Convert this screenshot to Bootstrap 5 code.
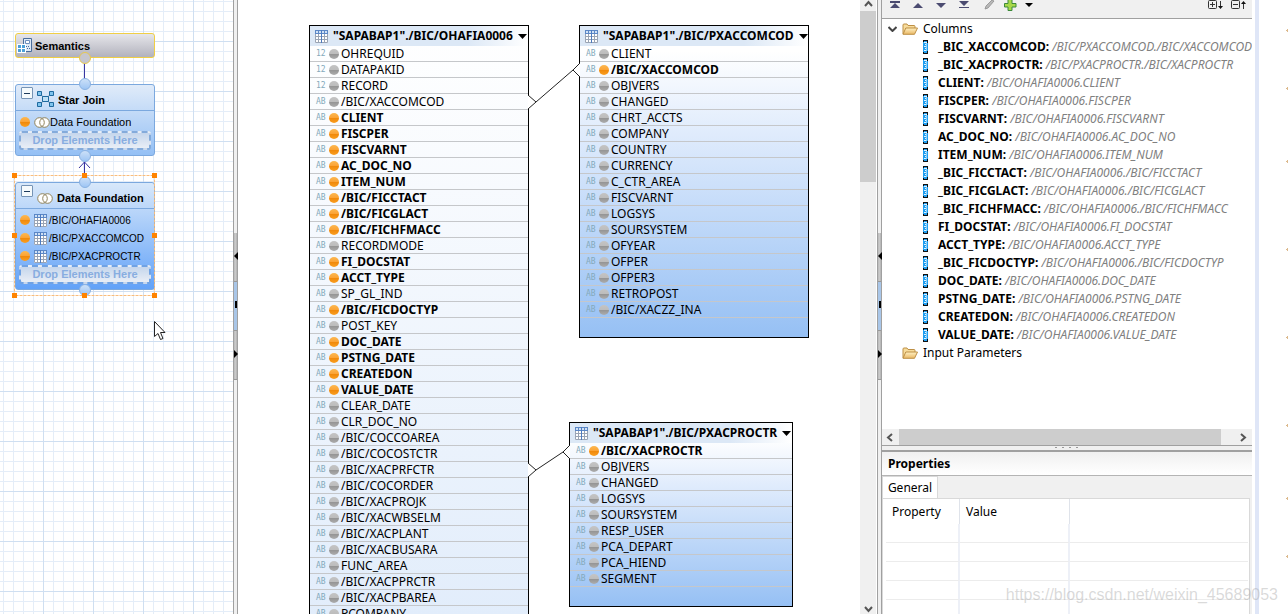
<!DOCTYPE html>
<html lang="en">
<head>
<meta charset="utf-8">
<meta name="viewport" content="width=device-width, initial-scale=1">
<title>Calculation view editor</title>
<link href="https://cdn.jsdelivr.net/npm/bootstrap@5.3.0/dist/css/bootstrap.min.css" rel="stylesheet">
<style>
  body { font-family: "Noto Sans", "Open Sans", sans-serif; font-size: 12px; line-height: 16px; color: #000; background: #fff; }
  button { border: 0; background: none; padding: 0; color: inherit; display: block; line-height: 0; }
  svg { display: block; flex: none; }

  /* scenario pane */
  .scenario { width: 233px; font-family: "Liberation Sans", Arial, sans-serif; font-size: 11px; white-space: nowrap;
    background-image:
      linear-gradient(#cfdff1 1px, transparent 1px), linear-gradient(90deg, #cfdff1 1px, transparent 1px),
      linear-gradient(#e4edf8 1px, transparent 1px), linear-gradient(90deg, #e4edf8 1px, transparent 1px);
    background-size: 50px 50px, 50px 50px, 10px 10px, 10px 10px;
    background-position: 0 41px, 43px 0, 0 1px, 3px 0; }
  .flow-node { left: 15px; width: 140px; border: 1px solid #7ba8de; border-radius: 3px; }
  .node-semantics { top: 33px; height: 25px; gap: 1px; border-color: #f0cf45; background: linear-gradient(#e6e6ea, #b2b2bd); }
  .node-star { top: 84px; height: 72px; background: linear-gradient(#e0ebf9, #94c0f5); }
  .node-data { top: 182px; height: 108px; background: linear-gradient(#d8e8fa, #62a2f8); }
  .node-head { height: 26px; margin-bottom: 2px; border-bottom: 1px solid #7ba8de; padding: 2px 5px 0; gap: 4px; }
  .toggle-box { width: 12px; height: 12px; background: #f5fafc; border: 1px solid #7593b5; border-radius: 1px; }
  .toggle-box::after { content: ""; display: block; width: 6px; height: 1px; background: #1d3b5c; margin: 4px 2px; }
  .src-row { height: 18px; padding-left: 4px; }
  .src-row .bw-name { font-size: 10px; padding: 2px 0 0 2px; }
  .drop-here { height: 19px; margin: 0 3px; line-height: 15px; border: 2px dashed #84abdb; border-radius: 3px; background: linear-gradient(#c5d6ec, #e9eef6); color: #88ade0; }
  .node-data .drop-here { border-color: #6fa2e4; }

  /* sashes */
  .sash { width: 5px; background: #f0f0f0; border-left: 1px solid #a0a0a0; border-right: 1px solid #a0a0a0; padding-top: 233px; }
  .sash button { width: 3px; height: 49px; background: linear-gradient(90deg, #bbb, #c9c9c9 50%, #b2b2b2); border-bottom: 1px solid #999; }
  .sash button.mid { background: #a9c6e8; }

  /* join canvas */
  .join-table { border: 1px solid #000; }
  .join-head { height: 20px; padding: 0 4px 0 5px; gap: 5px; background: linear-gradient(90deg, #dce8f6 72%, #fff); white-space: nowrap; }
  .join-row { height: 16px; line-height: 15px; border-bottom: 1px solid #c5c7ca; padding-left: 6px; white-space: nowrap; }
  .join-row small { font: 8px/15px "DejaVu Sans Mono", monospace; width: 13px; color: #84a9bb; }
  .join-row svg { margin-right: 2px; }
  .join-a { left: 71px; top: 25px; width: 220px; background: linear-gradient(#fff, #e2edfb 590px); }
  .join-b { left: 341px; top: 25px; width: 230px; }
  .join-c { left: 331px; top: 422px; width: 224px; }
  .join-b, .join-c { padding-bottom: 19px; background: linear-gradient(#fff 8%, #dfebfc 35%, #96c0f4); }
  .vbar { width: 16px; margin-right: 1px; background: #f0f0f0; }
  .vbar .thumb { height: 171px; background: #cdcdcd; }

  /* output pane */
  .output { width: 370px; }
  .tools { height: 19px; background: #f0f0f0; border-bottom: 1px solid #a0a0a0; padding: 0 6px 8px 8px; }
  .tree-line { height: 18px; line-height: 18px; padding-left: 20px; gap: 5px; white-space: nowrap; }
  .tree-line.root { height: 19px; padding-left: 6px; }
  .tree-line.leaf { padding-left: 41px; gap: 9px; }
  .tree-line i { color: #808080; }
  .hbar { height: 16px; background: #f0f0f0; }
  .hbar .thumb { background: #cdcdcd; }
  .grip { height: 7px; border-top: 1px solid #a0a0a0; border-bottom: 2px solid #a0a0a0; background: #f0f0f0; }
  .props-title { height: 24px; line-height: 23px; padding-left: 6px; font-size: 12px; background: linear-gradient(#f0f0f0, #fff); border-bottom: 1px solid #b4b4b4; }
  .props-body { background: #f0f0f0; }
  .tabstrip button { width: 56px; height: 22px; line-height: 20px; background: #fff; border: 1px solid #d9d9d9; border-bottom: 0; }
  .props-box { border: 1px solid #d9d9d9; border-bottom: 0; margin-right: 2px; padding: 0 1px 0 3px; background: #fff; }
  .props-grid { table-layout: fixed; border-collapse: separate; border-spacing: 0; }
  .props-grid th { font-weight: 400; height: 25px; padding: 0 6px; border-right: 1px solid #dfe3ea; }
  .props-grid td { height: 19px; padding: 0; border-bottom: 1px solid #ececec; border-right: 2px solid #edf0f7; }
  .props-grid tr:last-child td { height: 14px; border-bottom: 0; }
  .props-grid th:last-child, .props-grid td:last-child { border-right: 0; }
  .page-edge { width: 36px; padding-left: 3px; }
  .page-edge .stripe { width: 4px; background: #dfe6f7; }
  .watermark { right: 10px; bottom: 8px; font: 16px/22px "Liberation Sans", Arial, sans-serif; color: rgba(150,150,150,.36); }
</style>
</head>
<body class="vh-100 overflow-hidden d-flex position-relative">

<svg width="0" height="0" class="position-absolute" aria-hidden="true">
  <defs>
    <linearGradient id="gOr" x2="0" y2="1"><stop offset="0" stop-color="#fcb851"/><stop offset=".5" stop-color="#fba233"/><stop offset=".55" stop-color="#f08a0c"/><stop offset="1" stop-color="#fb9f20"/></linearGradient>
    <linearGradient id="gGr" x2="0" y2="1"><stop offset="0" stop-color="#c4c4c4"/><stop offset=".45" stop-color="#bdbdbd"/><stop offset=".55" stop-color="#969696"/><stop offset="1" stop-color="#adadad"/></linearGradient>
    <linearGradient id="gPort" x2="0" y2="1"><stop offset="0" stop-color="#cfe2f8"/><stop offset="1" stop-color="#9cc4f4"/></linearGradient>
    <linearGradient id="gFold" x2="0" y2="1"><stop offset="0" stop-color="#fff1c4"/><stop offset="1" stop-color="#e9b865"/></linearGradient>
    <symbol id="ballO" viewBox="0 0 10 10"><circle cx="5" cy="5" r="5" fill="url(#gOr)"/></symbol>
    <symbol id="ballG" viewBox="0 0 10 10"><circle cx="5" cy="5" r="5" fill="url(#gGr)"/></symbol>
    <symbol id="tbl" viewBox="0 0 13 13"><path fill="#fff" d="M0 0h13v13H0z"/><path fill="#5b87c6" d="M0 0h13v4H0z"/><path fill="#cfe0f4" d="M1 1h2v2H1zM4 1h2v2H4zM7 1h2v2H7zM10 1h2v2h-2z"/><path stroke="#9aa4b4" fill="none" d="M.5 4v8.500h12V4M3.500 4v9M9.500 4v9M0 6.500h13M0 9.500h13"/><path stroke="#4e7cc0" d="M6.500 0v13"/></symbol>
    <symbol id="rings" viewBox="0 0 16 11"><circle cx="5.500" cy="5.500" r="4.800" fill="#fff"/><circle cx="10.500" cy="5.500" r="4.800" fill="#fff"/><g fill="none" stroke="#8f8259"><circle cx="5.500" cy="5.500" r="4.800"/><circle cx="10.500" cy="5.500" r="4.800"/></g></symbol>
    <symbol id="col" viewBox="0 0 6 14"><path fill="#1f9df0" d="M0 0h5v14H0z"/><path fill="#111" d="M0 0h5v1H0zM0 13h5v1H0zM4 1h1v2H4zM4 11h1v2H4zM0 1h1v1H0zM0 12h1v1H0z"/><path fill="#e3f5ff" d="M1 2h3v1H1zM2 4h2v1H2zM1 6h3v1H1zM2 8h2v1H2zM1 10h3v1H1z"/><path fill="#8fd2fb" d="M3 3h1v8H3z"/></symbol>
    <symbol id="folder" viewBox="0 0 16 12"><path d="M1 11V2q0-1 1-1h3l1 1.500h6q1 0 1 1V5" fill="#f7dc9c" stroke="#bd8f45"/><path d="M1 11.300 3.800 5H15.500l-3 6.300z" fill="url(#gFold)" stroke="#bd8f45"/></symbol>
  </defs>
</svg>

<!-- scenario pane -->
<aside class="scenario position-relative flex-shrink-0 overflow-hidden">
  <div class="flow-node node-semantics position-absolute d-flex align-items-center fw-bold">
    <svg width="18" height="16" viewBox="0 0 18 16"><path d="M7.500.5h8v13h-8z" fill="#dde9f7" stroke="#4a6d9c"/><path d="M9.500 2.500h4v3h-4z" fill="#fff" stroke="#6d8fbd"/><path d="M10 8h1v1h-1zM12 8h1v1h-1zM11 10h1v1h-1zM13 10h1v1h-1z" fill="#476b9c"/><path d="M1 6h9v9H1z" fill="#fff"/><path d="M2 7h3v3H2zM6 7h3v3H6zM2 11h3v3H2zM6 11h3v3H6z" fill="#4c9fd8"/></svg>
    <span>Semantics</span>
  </div>
  <div class="flow-node node-star position-absolute">
    <div class="node-head d-flex fw-bold">
      <button class="toggle-box" aria-label="Collapse Star Join"></button>
      <svg class="mt-1" width="17" height="16" viewBox="0 0 17 16"><path d="M3 3l11 10M14 3 3 13" stroke="#5c6f84"/><g fill="#7fc4ee" stroke="#1f6a9f"><path d="M.5.5h4v4h-4zM12.500.5h4v4h-4zM.5 11.500h4v4h-4zM12.500 11.500h4v4h-4z"/><path fill="#bfe0f5" d="M5.500 5.500h6v5h-6z"/></g></svg>
      <span class="pt-1 mt-1 lh-1">Star Join</span>
    </div>
    <div class="src-row d-flex align-items-center"><svg width="10" height="10"><use href="#ballO"/></svg><svg class="ms-1" width="16" height="11"><use href="#rings"/></svg><span>Data Foundation</span></div>
    <div class="drop-here text-center fw-bold">Drop Elements Here</div>
  </div>
  <div class="flow-node node-data position-absolute">
    <div class="node-head d-flex fw-bold">
      <button class="toggle-box" aria-label="Collapse Data Foundation"></button>
      <svg class="mt-2" width="16" height="11"><use href="#rings"/></svg>
      <span class="pt-1 mt-1 lh-1">Data Foundation</span>
    </div>
    <div id="sources"></div>
    <div class="drop-here text-center fw-bold">Drop Elements Here</div>
  </div>
  <svg class="position-absolute top-0 start-0" width="233" height="400" fill="none">
    <path d="M84.500 63v16M84.500 162v16M79 168l5.500-6 5.500 6" stroke="#3a35a0"/>
    <path d="M14.500 175.500h140v120h-140z" stroke="#f9bd7c" stroke-dasharray="3 1"/>
    <circle cx="85" cy="58" r="5.500" fill="#c6c6ce" stroke="#e8c84e"/>
    <g fill="url(#gPort)" stroke="#8ab2e2"><circle cx="85" cy="84" r="5.500"/><circle cx="85" cy="156" r="5.500"/><circle cx="85" cy="182" r="5.500"/><circle cx="85" cy="290" r="5.500"/></g>
    <path fill="#ff8400" d="M12 173h5v5h-5zM82 173h5v5h-5zM152 173h5v5h-5zM12 233h5v5h-5zM152 233h5v5h-5zM12 293h5v5h-5zM82 293h5v5h-5zM152 293h5v5h-5z"/>
    <path d="M154.500 321.500v15l3.500-3 2.500 6 2.500-1-2.500-6h4.500z" fill="#fff" stroke="#222"/>
  </svg>
</aside>

<div class="sash flex-shrink-0 position-relative">
  <button aria-label="Collapse left"></button><button class="mid" aria-label="Restore"></button><button aria-label="Collapse right"></button>
  <svg class="position-absolute start-0 top-0" width="4" height="400"><path d="M4 252v8l-4-4zM1 301h2v7H1zM0 350v8l4-4z"/></svg>
</div>

<!-- join canvas -->
<main class="position-relative flex-grow-1 overflow-hidden">
  <section class="join-table join-a position-absolute" data-key="a"></section>
  <section class="join-table join-b position-absolute" data-key="b"></section>
  <section class="join-table join-c position-absolute" data-key="c"></section>
  <svg class="position-absolute top-0 start-0" width="600" height="600" fill="#fff">
    <path d="M290 95v14l8-7zM342 63v14l-7-7zM290 463v14l8-7zM332 445v14l-7-7z"/>
    <path fill="none" stroke="#222" d="M290 95l8 7-8 7M298 102l37-32M342 63l-7 7 7 7M290 463l8 7-8 7M298 470l27-18M332 445l-7 7 7 7"/>
  </svg>
</main>
<div class="vbar flex-shrink-0 d-flex flex-column">
  <button class="mx-auto" aria-label="Scroll up"><svg width="9" height="11" fill="none" stroke="#555" stroke-width="2"><path d="M1 6l3.500-4L8 6"/></svg></button>
  <div class="thumb"></div>
  <button class="mx-auto mt-auto" aria-label="Scroll down"><svg width="9" height="11" fill="none" stroke="#555" stroke-width="2"><path d="M1 4l3.500 4L8 4"/></svg></button>
</div>

<div class="sash flex-shrink-0 position-relative">
  <button aria-label="Collapse left"></button><button class="mid" aria-label="Restore"></button><button aria-label="Collapse right"></button>
  <svg class="position-absolute start-0 top-0" width="4" height="400"><path d="M4 252v8l-4-4zM1 301h2v7H1zM0 350v8l4-4z"/></svg>
</div>

<!-- output pane -->
<section class="output flex-shrink-0 d-flex flex-column">
  <div class="tools d-flex align-items-center">
    <button aria-label="Move to top"><svg width="23" height="10" fill="#4b4b70"><path d="M0 1h10v2H0zM5 3l5 5H0z"/></svg></button>
    <button aria-label="Move up"><svg width="23" height="10" fill="#4b4b70"><path d="M5 3l5 5H0z"/></svg></button>
    <button aria-label="Move down"><svg width="23" height="10" fill="#4b4b70"><path d="M5 8 0 3h10z"/></svg></button>
    <button aria-label="Move to bottom"><svg width="25" height="10" fill="#4b4b70"><path d="M5 6 0 1h10zM0 7h10v1H0z"/></svg></button>
    <button aria-label="Edit"><svg width="20" height="10"><path d="M1 9l1-3 6-6 2 1-6 7z" fill="#b8b8b8" stroke="#8d8d8d" stroke-width=".8"/></svg></button>
    <button aria-label="Add"><svg width="21" height="12"><path d="M4 .5h4v4h4v3.500H8v3.500H4V8H.5V4.500H4z" fill="#a8d84a" stroke="#3c8a3a"/></svg></button>
    <button aria-label="Add menu"><svg width="8" height="6"><path d="M0 1h8L4 5z"/></svg></button>
    <button class="ms-auto me-2" aria-label="Expand all"><svg width="15" height="10" fill="none" stroke="#333"><rect x=".5" y=".5" width="8" height="8" rx="1"/><path d="M2 4.500h5M4.500 2v5M12.500 1v6"/><path fill="#111" stroke="none" d="M10 6h5l-2.500 3z"/></svg></button>
    <button aria-label="Collapse all"><svg width="15" height="10" fill="none" stroke="#333"><rect x=".5" y=".5" width="8" height="8" rx="1"/><path d="M2 4.500h5M12.500 3v6"/><path fill="#111" stroke="none" d="M10 4h5l-2.500-3z"/></svg></button>
  </div>
  <div class="flex-grow-1 overflow-hidden">
    <div class="tree-line root d-flex align-items-center"><svg width="9" height="6" fill="none" stroke="#444" stroke-width="2"><path d="M.5 1l4 4 4-4"/></svg><svg width="16" height="12"><use href="#folder"/></svg><span>Columns</span></div>
    <div id="columns"></div>
    <div class="tree-line d-flex align-items-center"><svg width="16" height="12"><use href="#folder"/></svg><span>Input Parameters</span></div>
  </div>
  <div class="hbar d-flex">
    <button class="px-1" aria-label="Scroll left"><svg width="9" height="9" fill="none" stroke="#555" stroke-width="2"><path d="M6 1 2 4.500 6 8"/></svg></button>
    <div class="thumb flex-grow-1"></div>
    <button class="ps-3 pe-1" aria-label="Scroll right"><svg width="11" height="9" fill="none" stroke="#555" stroke-width="2"><path d="M4 1l4 3.500L4 8"/></svg></button>
  </div>
  <div class="grip"><svg class="mx-auto" width="24" height="3" fill="#999"><path d="M0 1h2v1H0zM7 1h2v1H7zM14 1h2v1h-2zM21 1h2v1h-2z"/></svg></div>
  <h2 class="props-title fw-bold m-0">Properties</h2>
  <div class="props-body">
    <div class="tabstrip"><button>General</button></div>
    <div class="props-box">
      <table class="props-grid w-100">
        <colgroup><col style="width:74px"><col style="width:110px"><col></colgroup>
        <thead><tr><th>Property</th><th>Value</th><th></th></tr></thead>
        <tbody><tr><td></td><td></td><td></td></tr><tr><td></td><td></td><td></td></tr><tr><td></td><td></td><td></td></tr><tr><td></td><td></td><td></td></tr><tr><td></td><td></td><td></td></tr></tbody>
      </table>
    </div>
  </div>
</section>
<div class="page-edge flex-shrink-0 d-flex justify-content-between">
  <div class="stripe h-100"></div>
  <svg width="2" height="600" fill="#dcb98c"><path d="M0 30h2v1H0zM1 29h1v3H1zM0 88h2v1H0zM1 87h1v3H1zM0 161h2v1H0zM1 160h1v3H1zM0 249h2v1H0zM1 248h1v3H1zM0 337h2v1H0zM1 336h1v3H1zM0 425h2v1H0zM1 424h1v3H1zM0 498h2v1H0zM1 497h1v3H1zM0 556h2v1H0zM1 555h1v3H1z"/></svg>
</div>
<div class="watermark position-absolute">https://blog.csdn.net/weixin_45689053</div>

<script>
  // A leading * marks a column that is part of the output, # a numeric type.
  const tables = {
    a: ['"SAPABAP1"./BIC/OHAFIA0006', '#OHREQUID #DATAPAKID #RECORD /BIC/XACCOMCOD *CLIENT *FISCPER *FISCVARNT *AC_DOC_NO *ITEM_NUM */BIC/FICCTACT */BIC/FICGLACT */BIC/FICHFMACC RECORDMODE *FI_DOCSTAT *ACCT_TYPE SP_GL_IND */BIC/FICDOCTYP POST_KEY *DOC_DATE *PSTNG_DATE *CREATEDON *VALUE_DATE CLEAR_DATE CLR_DOC_NO /BIC/COCCOAREA /BIC/COCOSTCTR /BIC/XACPRFCTR /BIC/COCORDER /BIC/XACPROJK /BIC/XACWBSELM /BIC/XACPLANT /BIC/XACBUSARA FUNC_AREA /BIC/XACPPRCTR /BIC/XACPBAREA PCOMPANY'],
    b: ['"SAPABAP1"./BIC/PXACCOMCOD', 'CLIENT */BIC/XACCOMCOD OBJVERS CHANGED CHRT_ACCTS COMPANY COUNTRY CURRENCY C_CTR_AREA FISCVARNT LOGSYS SOURSYSTEM OFYEAR OFPER OFPER3 RETROPOST /BIC/XACZZ_INA'],
    c: ['"SAPABAP1"./BIC/PXACPROCTR', '*/BIC/XACPROCTR OBJVERS CHANGED LOGSYS SOURSYSTEM RESP_USER PCA_DEPART PCA_HIEND SEGMENT']
  };
  for (const box of document.querySelectorAll('.join-table')) {
    const [title, cols] = tables[box.dataset.key];
    box.innerHTML = `<div class="join-head d-flex align-items-center fw-bold"><svg width="13" height="13"><use href="#tbl"/></svg><span>${title}</span><button class="ms-auto" aria-label="Table menu"><svg width="9" height="5"><path d="M0 0h9L4.500 5z"/></svg></button></div>` +
      cols.split(' ').map(c => {
        const out = c[0] === '*', num = c[0] === '#';
        return `<div class="join-row d-flex align-items-center${out ? ' fw-bold' : ''}"><small>${num ? '12' : 'AB'}</small><svg width="10" height="10"><use href="#ball${out ? 'O' : 'G'}"/></svg><span>${c.replace(/^[*#]/, '')}</span></div>`;
      }).join('');
  }
  document.getElementById('sources').innerHTML = ['OHAFIA0006', 'PXACCOMCOD', 'PXACPROCTR'].map(n =>
    `<div class="src-row d-flex align-items-center"><svg width="10" height="10"><use href="#ballO"/></svg><svg class="ms-1" width="13" height="13"><use href="#tbl"/></svg><span class="bw-name">/BIC/${n}</span></div>`).join('');
  const F = '/BIC/OHAFIA0006.';
  document.getElementById('columns').innerHTML = [
    ['_BIC_XACCOMCOD', '/BIC/PXACCOMCOD./BIC/XACCOMCOD'], ['_BIC_XACPROCTR', '/BIC/PXACPROCTR./BIC/XACPROCTR'],
    ['CLIENT'], ['FISCPER'], ['FISCVARNT'], ['AC_DOC_NO'], ['ITEM_NUM'],
    ['_BIC_FICCTACT', F + '/BIC/FICCTACT'], ['_BIC_FICGLACT', F + '/BIC/FICGLACT'], ['_BIC_FICHFMACC', F + '/BIC/FICHFMACC'],
    ['FI_DOCSTAT'], ['ACCT_TYPE'], ['_BIC_FICDOCTYP', F + '/BIC/FICDOCTYP'], ['DOC_DATE'], ['PSTNG_DATE'], ['CREATEDON'], ['VALUE_DATE']
  ].map(([n, s]) => `<div class="tree-line leaf d-flex align-items-center"><svg width="6" height="14"><use href="#col"/></svg><span><b>${n}:</b> <i>${s || F + n}</i></span></div>`).join('');
</script>
<script src="https://cdn.jsdelivr.net/npm/bootstrap@5.3.0/dist/js/bootstrap.bundle.min.js"></script>
</body>
</html>
